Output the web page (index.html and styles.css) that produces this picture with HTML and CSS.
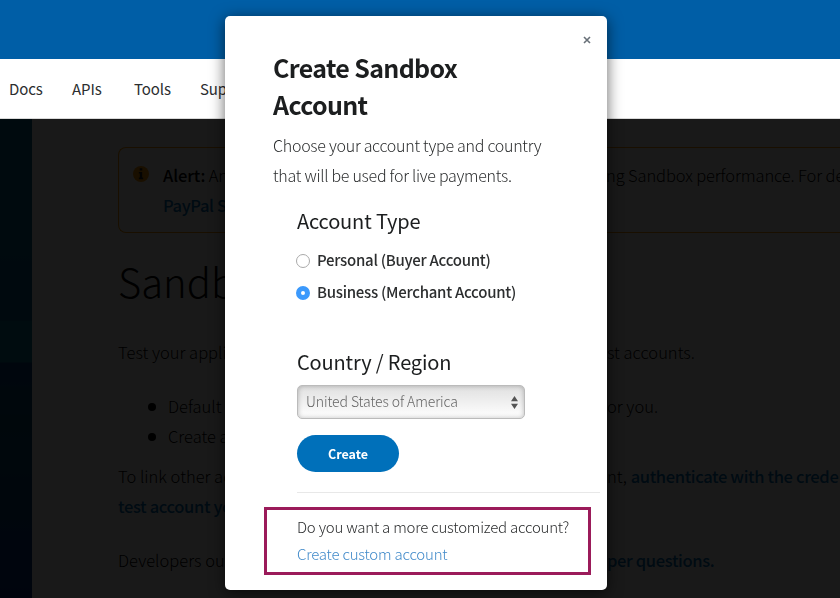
FILE: index.html
```html
<!DOCTYPE html>
<html lang="en">
<head>
  <meta charset="UTF-8">
  <title>Sandbox Accounts</title>
  <meta name="viewport" content="width=device-width, initial-scale=1">
  <link rel="stylesheet" href="styles.css">
</head>
<body>
  <header class="header">
    <div class="topbar"></div>
    <nav class="nav">
      <a class="docs">Docs</a>
      <a class="apis">APIs</a>
      <a class="tools">Tools</a>
      <a class="support">Support</a>
    </nav>
  </header>

  <div class="page">
    <aside class="sidebar"></aside>
    <main class="content">
      <div class="alert">
        <svg class="alert-icon" viewBox="0 0 16 16" width="16" height="16">
          <circle cx="8" cy="8" r="8" fill="#f90"/>
          <path d="M6.7 2.3h2.6v2.3H6.7zM5.8 6h3.4v5.6h1v1.6H5.8v-1.6h1V7.6h-1z" fill="#222"/>
        </svg>
        <div>
          <p class="line"><span class="start"><b>Alert:</b> An issue</span><span>ng Sandbox performance. For de</span></p>
          <p class="line"><a class="link">PayPal Status</a></p>
        </div>
      </div>
      <h1>Sandbox</h1>
      <p class="line intro"><span class="start">Test your application</span><span class="end">st accounts.</span></p>
      <ul>
        <li class="line"><span class="start">Default accounts</span><span class="end">or you.</span></li>
        <li class="line"><span class="start">Create accounts</span></li>
      </ul>
      <p class="line"><span class="start">To link other accounts</span><span class="end">nt, <a class="link">authenticate with the crede</a></span></p>
      <p class="line"><a class="link">test account you</a></p>
      <p class="line outside"><span class="start">Developers outside</span><span class="end"><a class="link">per questions.</a></span></p>
    </main>
  </div>

  <div class="backdrop"></div>

  <div class="modal">
    <button class="close" aria-label="Close">
      <svg viewBox="0 0 8 8" width="8" height="8"><path d="M1 1l6 6M7 1L1 7" stroke="#687078" stroke-width="1.6"/></svg>
    </button>
    <h2>Create Sandbox<br>Account</h2>
    <p class="desc">Choose your account type and country<br>that will be used for live payments.</p>
    <form class="form">
      <h3>Account Type</h3>
      <label class="option"><span class="radio"></span><span class="option-text">Personal (Buyer Account)</span></label>
      <label class="option"><span class="radio checked"></span><span class="option-text">Business (Merchant Account)</span></label>
      <h3 class="country">Country / Region</h3>
      <div class="select">
        <span class="select-text">United States of America</span>
        <svg viewBox="0 0 7 13" width="7" height="13"><path d="M3.5 0L7 5.3H0zM3.5 13L7 7.7H0z" fill="#555"/></svg>
      </div>
      <button class="create" type="button">Create</button>
    </form>
    <hr>
    <div class="custom">
      <p>Do you want a more customized account?</p>
      <a class="custom-link">Create custom account</a>
    </div>
  </div>
</body>
</html>
```
FILE: styles.css
```css
* { box-sizing: border-box; }
body { margin: 0; height: 598px; overflow: hidden; font-family: "Noto Sans CJK SC", "Open Sans", sans-serif; color: #2c2e2f; background: #fff; }
h1, h2, h3, p, ul { margin: 0; padding: 0; }

/* header stays above the backdrop */
.header { position: relative; z-index: 2; }
.topbar { height: 59px; background: #005ea6; }
.nav { display: flex; height: 60px; padding-left: 9px; background: #fff; border-bottom: 1px solid #d9d9d9; font-size: 15px; line-height: 60px; letter-spacing: -0.1px; }
.docs { width: 63px; }
.apis { width: 62px; }
.tools { width: 66px; }

.page { display: flex; height: 479px; }
.sidebar { flex: none; width: 32px; background: linear-gradient(#00688b 0, #00688b 100px, #005a8c 201px, #007a96 202px, #007a96 243px, #003f87 244px, #004e75 300px, #003087 479px); }
.content { flex: 1; min-width: 0; overflow: hidden; padding: 28px 0 0 86px; font-size: 16.5px; font-weight: 300; line-height: 30px; color: #000; white-space: nowrap; }
.alert { display: flex; height: 86px; padding: 12px 0 0 14px; border: 1px solid #f90; border-right: 0; border-radius: 8px 0 0 8px; }
.alert b { font-weight: 500; }
.alert-icon { flex: none; margin: 6px 14px 0 0; }
.line { display: flex; }
.start { flex: none; width: 489px; }
.alert .start { width: 443px; }
.alert .line { letter-spacing: -0.12px; }
.link { color: #0070ba; font-weight: 500; letter-spacing: -0.35px; }
h1 { margin-top: 18px; font-size: 40px; font-weight: 200; line-height: 60px; }
.intro { margin-top: 26px; }
ul { margin: 24px 0 10px 50px; list-style: none; }
li .start { width: 439px; }
li::before { content: ""; width: 8px; height: 8px; margin: 12px 12px 0 -20px; border-radius: 50%; background: #000; }
.outside { margin-top: 24px; }
.backdrop { position: fixed; inset: 0; z-index: 1; background: rgba(0,0,0,0.9); }

.modal { position: fixed; top: 16px; left: 225px; z-index: 3; width: 382px; height: 574px; padding: 33px 7px 0 48px; background: #fff; border-radius: 5px; box-shadow: 0 3px 15px rgba(0,0,0,0.6); white-space: nowrap; }
.close { position: absolute; top: 20px; right: 16px; width: 8px; height: 8px; padding: 0; border: 0; background: none; }
.close svg { display: block; }
h2 { font-size: 25px; font-weight: 700; line-height: 37px; letter-spacing: -0.65px; color: #1c1e1f; }
.desc { margin-top: 7px; font-size: 16px; font-weight: 300; line-height: 30px; letter-spacing: -0.27px; }
.form { margin-left: 24px; }
h3 { margin-top: 16px; font-size: 20px; font-weight: 400; line-height: 30px; letter-spacing: -0.15px; color: #1c1e1f; }
.option { display: flex; align-items: center; height: 32px; font-size: 15px; font-weight: 500; letter-spacing: -0.27px; }
h3 + .option { margin-top: 9px; }
.option-text { padding-bottom: 3px; }
.radio { width: 14px; height: 14px; margin: 0 7px 0 -1px; border: 1px solid #aaa; border-radius: 50%; background: #fff; }
.checked { border: 5px solid #3b99fc; }
.country { margin-top: 38px; }
.select { display: flex; align-items: center; justify-content: space-between; width: 228px; height: 34px; margin-top: 8px; padding: 0 6px 0 8px; border: 1px solid #bbb; border-radius: 5px; background: linear-gradient(#e0e0e0, #fff); box-shadow: inset 0 0 5px rgba(0,0,0,0.25); color: #666; font-size: 14px; font-weight: 300; letter-spacing: -0.1px; }
.select-text { padding-bottom: 2px; }
.create { display: block; width: 102px; height: 37px; margin-top: 16px; padding: 0 0 1px; border: 0; border-radius: 19px; background: #0070ba; color: #fff; font: 700 12.5px "Noto Sans CJK SC", sans-serif; }
hr { margin: 20px 0 0 24px; border: 0; border-top: 1px solid #e8e8e8; }
.custom { width: 327px; height: 68px; margin: 14px 0 0 -9px; padding: 3px 0 0 30px; border: 3px solid #9b1b5a; font-size: 15px; font-weight: 300; line-height: 27px; letter-spacing: -0.22px; }
.custom-link { color: #428bca; }
```
